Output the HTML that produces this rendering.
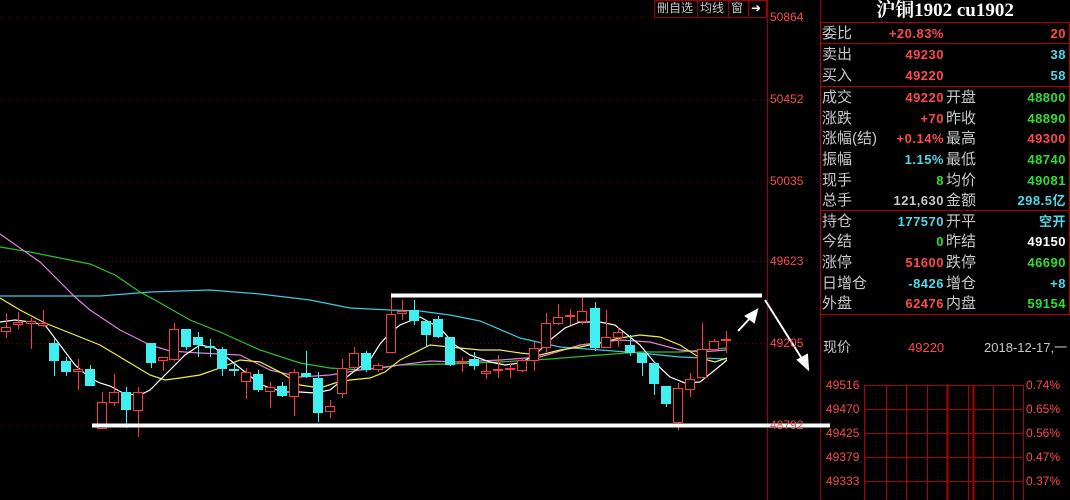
<!DOCTYPE html>
<html><head><meta charset="utf-8"><style>
html,body{margin:0;padding:0;background:#000;width:1070px;height:500px;overflow:hidden;font-family:"Liberation Sans","Noto Sans CJK SC",sans-serif}
.t{position:absolute;white-space:nowrap;font-size:14px;line-height:21px}
.l{color:#c8c8c8}
.r{color:#ff4a4a}.c{color:#4fd8ea}.g{color:#2ee02e}.w{color:#fff}
.b{font-family:"Liberation Sans","Noto Sans CJK SC",sans-serif;font-weight:bold;letter-spacing:0.5px}
</style></head><body>
<svg width="1070" height="500" style="position:absolute;left:0;top:0">
<g stroke="#6a0000" stroke-dasharray="1,3" stroke-width="1">
<line x1="0" y1="17.5" x2="767" y2="17.5"/><line x1="0" y1="100.5" x2="767" y2="100.5"/><line x1="0" y1="182.5" x2="767" y2="182.5"/><line x1="0" y1="261.5" x2="767" y2="261.5"/><line x1="0" y1="343.5" x2="767" y2="343.5"/><line x1="0" y1="425.5" x2="767" y2="425.5"/>
</g>
<line x1="767.5" y1="0" x2="767.5" y2="500" stroke="#a00000"/>
<line x1="820.5" y1="0" x2="820.5" y2="500" stroke="#a00000"/>
<rect x="654.5" y="0.5" width="112" height="17" fill="none" stroke="#a00000"/>
<line x1="697.5" y1="0" x2="697.5" y2="18" stroke="#a00000"/><line x1="728.5" y1="0" x2="728.5" y2="18" stroke="#a00000"/><line x1="748.5" y1="0" x2="748.5" y2="18" stroke="#a00000"/>
<g fill="none" stroke="#b00000">
<rect x="820.5" y="22.5" width="249" height="21"/><rect x="820.5" y="43.5" width="249" height="43"/><rect x="820.5" y="86.5" width="249" height="124"/><rect x="820.5" y="210.5" width="249" height="104"/>
</g>
<g stroke="#b00000">
<line x1="864" y1="385.5" x2="1023" y2="385.5"/><line x1="864" y1="409.5" x2="1023" y2="409.5"/><line x1="864" y1="433.5" x2="1023" y2="433.5"/><line x1="864" y1="457.5" x2="1023" y2="457.5"/><line x1="864" y1="481.5" x2="1023" y2="481.5"/>
<line x1="864.5" y1="385" x2="864.5" y2="500"/><line x1="886.5" y1="385" x2="886.5" y2="500"/><line x1="906.5" y1="385" x2="906.5" y2="500"/><line x1="927.5" y1="385" x2="927.5" y2="500"/><line x1="947.5" y1="385" x2="947.5" y2="500" stroke-width="2"/><line x1="968.5" y1="385" x2="968.5" y2="500"/><line x1="973.5" y1="385" x2="973.5" y2="500" stroke-width="2"/><line x1="993.5" y1="385" x2="993.5" y2="500"/><line x1="1013.5" y1="385" x2="1013.5" y2="500"/><line x1="1023.5" y1="385" x2="1023.5" y2="500"/>
</g>
<g stroke="#600000" stroke-dasharray="1,3"><line x1="875.5" y1="385" x2="875.5" y2="500"/><line x1="896.5" y1="385" x2="896.5" y2="500"/><line x1="917.5" y1="385" x2="917.5" y2="500"/><line x1="937.5" y1="385" x2="937.5" y2="500"/><line x1="958.5" y1="385" x2="958.5" y2="500"/><line x1="983.5" y1="385" x2="983.5" y2="500"/><line x1="1003.5" y1="385" x2="1003.5" y2="500"/></g>
<g fill="none" stroke-width="1.2">
<polyline stroke="#40c8e0" points="0,296 50,296 100,296 150,292 210,290 260,294 310,300 350,308 390,310 420,311 450,315 480,321 520,338 560,347 600,350 640,353 680,357 727,359"/>
<polyline stroke="#30c030" points="0,247 30,252 60,258 90,264 115,275 140,292 155,300 190,320 220,332 260,350 300,363 330,368 360,370 400,365 450,364 500,362 550,359 600,355 640,352 680,352 727,348"/>
<polyline stroke="#e080e0" points="0,234 40,262 75,297 90,310 120,330 150,345 170,351 200,353 240,355 270,370 300,377 330,375 360,370 380,368 400,365 430,361 460,362 500,360 540,357 580,345 620,340 650,342 680,350 700,352 727,350"/>
<polyline stroke="#f0f040" points="0,298 20,310 45,323 75,335 100,345 125,360 150,375 165,380 180,378 200,375 220,368 240,360 260,362 280,372 300,385 320,388 335,383 350,380 370,378 385,372 400,360 430,345 460,348 480,350 500,350 520,353 540,355 560,350 580,347 600,343 620,338 640,335 660,337 680,345 700,358 715,362 727,358"/>
<polyline stroke="#fff" points="0,322 15,320 30,322 45,325 60,345 75,365 90,378 100,383 110,386 125,394 140,395 150,390 165,375 185,355 200,345 215,348 230,360 245,372 260,384 270,388 285,392 300,392 315,393 330,390 340,382 352,373 360,367 368,363 380,344 390,333 400,325 420,317 440,328 455,345 470,355 490,362 505,365 520,363 535,355 550,340 565,328 580,322 600,322 615,325 630,337 640,345 655,363 670,377 685,383 700,382 715,370 727,360"/>
</g>
<g id="cd" stroke-width="1"></g>
<line x1="391" y1="295.5" x2="762" y2="295.5" stroke="#fff" stroke-width="4"/>
<line x1="92" y1="425.5" x2="830" y2="425.5" stroke="#fff" stroke-width="4"/>
<g stroke="#fff" stroke-width="2" fill="#fff">
<line x1="738" y1="331" x2="753" y2="315"/><polygon points="757,310 746,316 754,322"/>
<line x1="765" y1="300" x2="804" y2="362"/><polygon points="808,369 798,360 807,355"/>
</g>
</svg>
<script>
var C=[[6,327,331,313,338,'r'],[18,322,324,312,329,'r'],[31,321,323,318,349,'r'],[43,323,325,310,327,'r'],[54,343,361,339,376,'c'],[66,361,372,357,376,'c'],[78,369,371,359,390,'r'],[90,369,386,365,386,'c'],[102,402,428,392,428,'r'],[114,392,402,374,406,'r'],[126,392,410,387,428,'c'],[138,392,410,387,437,'r'],[151,343,363,343,368,'c'],[163,357,360,357,371,'r'],[174,329,359,323,361,'r'],[186,329,347,329,350,'c'],[198,337,345,332,357,'c'],[210,346,348,339,357,'c'],[222,349,369,347,376,'c'],[234,369,371,363,376,'c'],[246,372,381,368,399,'r'],[258,374,390,370,392,'c'],[270,387,391,382,408,'r'],[282,386,396,382,397,'c'],[294,372,396,369,416,'r'],[306,373,377,351,378,'c'],[318,378,413,372,422,'c'],[330,406,411,400,418,'r'],[342,368,393,359,398,'r'],[354,353,367,347,369,'r'],[366,353,370,351,372,'c'],[378,365,369,363,372,'r'],[391,314,352,293,352,'r'],[402,311,313,300,320,'r'],[414,310,321,300,325,'c'],[426,321,335,321,347,'c'],[438,319,337,316,338,'c'],[450,337,365,337,366,'c'],[462,361,362,357,372,'r'],[474,359,366,352,370,'c'],[486,371,373,363,379,'r'],[498,369,370,355,378,'r'],[510,368,369,363,378,'r'],[522,360,370,358,372,'r'],[534,348,360,342,371,'r'],[546,323,347,313,352,'r'],[558,317,323,304,325,'r'],[570,315,316,309,325,'r'],[582,311,321,297,325,'r'],[595,308,348,302,351,'c'],[606,337,347,310,347,'r'],[618,332,337,327,347,'r'],[630,345,353,335,356,'c'],[642,353,363,353,376,'c'],[654,363,384,363,395,'c'],[666,386,404,386,407,'c'],[678,388,422,383,430,'r'],[690,379,389,373,397,'r'],[702,349,377,323,377,'r'],[714,341,349,339,349,'r'],[726,339,340,331,353,'r']];
var g=document.getElementById('cd'),s='';
C.forEach(function(a){var col=a[5]=='r'?'#ff3a3a':'#40f0f0';s+='<line x1="'+(a[0]+.5)+'" y1="'+a[3]+'" x2="'+(a[0]+.5)+'" y2="'+a[4]+'" stroke="'+col+'"/>';var h=Math.max(a[2]-a[1],1);if(a[5]=='r')s+='<rect x="'+(a[0]-4.5)+'" y="'+(a[1]+.5)+'" width="9" height="'+h+'" fill="#000" stroke="'+col+'"/>';else s+='<rect x="'+(a[0]-5)+'" y="'+a[1]+'" width="10" height="'+h+'" fill="'+col+'"/>';});
g.innerHTML=s;
</script>
<div class="t l" style="left:657px;top:-2px;font-size:12px">刪自选</div>
<div class="t l" style="left:700px;top:-2px;font-size:12px">均线</div>
<div class="t l" style="left:731px;top:-2px;font-size:12px">窗</div>
<div class="t w" style="left:751px;top:-2px;font-size:12px">➜</div>
<div class="t r" style="left:770px;top:7px;font-size:12px">50864</div>
<div class="t r" style="left:770px;top:89px;font-size:12px">50452</div>
<div class="t r" style="left:770px;top:171px;font-size:12px">50035</div>
<div class="t r" style="left:770px;top:251px;font-size:12px">49623</div>
<div class="t r" style="left:770px;top:333px;font-size:12px">49205</div>
<div class="t r" style="left:770px;top:415px;font-size:12px">48792</div>
<div class="t w" style="left:820px;width:250px;text-align:center;top:-1px;font-size:19px;line-height:24px;font-weight:bold;font-family:'Liberation Serif','Noto Serif CJK SC',serif">沪铜1902 cu1902</div>
<div id="rows"></div>
<script>
var R=[[23,'委比','+20.83%','r','','','20','r'],[44,'卖出','49230','r','','','38','c'],[65,'买入','49220','r','','','58','c'],[87,'成交','49220','r','开盘','','48800','g'],[108,'涨跌','+70','r','昨收','','48890','g'],[128,'涨幅(结)','+0.14%','r','最高','','49300','r'],[149,'振幅','1.15%','c','最低','','48740','g'],[170,'现手','8','g','均价','','49081','g'],[190,'总手','121,630','l','金额','','298.5亿','c'],[211,'持仓','177570','c','开平','','空开','c'],[231,'今结','0','g','昨结','','49150','w'],[252,'涨停','51600','r','跌停','','46690','g'],[273,'日增仓','-8426','c','增仓','','+8','c'],[293,'外盘','62476','r','内盘','','59154','g']];
var h='';R.forEach(function(a){h+='<div class="t l" style="left:822px;top:'+a[0]+'px;font-size:15px">'+a[1]+'</div><div class="t b '+a[3]+'" style="right:126px;top:'+a[0]+'px;font-size:13px">'+a[2]+'</div>';if(a[4])h+='<div class="t l" style="left:946px;top:'+a[0]+'px;font-size:15px">'+a[4]+'</div>';h+='<div class="t b '+a[7]+'" style="right:4px;top:'+a[0]+'px;font-size:13px">'+a[6]+'</div>';});
document.getElementById('rows').innerHTML=h;
</script>
<div class="t l" style="left:823px;top:337px;font-size:14px">现价</div>
<div class="t r" style="left:908px;top:337px;font-size:13px">49220</div>
<div class="t l" style="left:984px;top:337px;font-size:13px">2018-12-17,一</div>
<div class="t r" style="left:826px;top:375px;font-size:12px">49516</div>
<div class="t r" style="left:826px;top:399px;font-size:12px">49470</div>
<div class="t r" style="left:826px;top:423px;font-size:12px">49425</div>
<div class="t r" style="left:826px;top:447px;font-size:12px">49379</div>
<div class="t r" style="left:826px;top:471px;font-size:12px">49333</div>
<div class="t r" style="left:1026px;top:375px;font-size:12px">0.74%</div>
<div class="t r" style="left:1026px;top:399px;font-size:12px">0.65%</div>
<div class="t r" style="left:1026px;top:423px;font-size:12px">0.56%</div>
<div class="t r" style="left:1026px;top:447px;font-size:12px">0.47%</div>
<div class="t r" style="left:1026px;top:471px;font-size:12px">0.37%</div>
</body></html>
